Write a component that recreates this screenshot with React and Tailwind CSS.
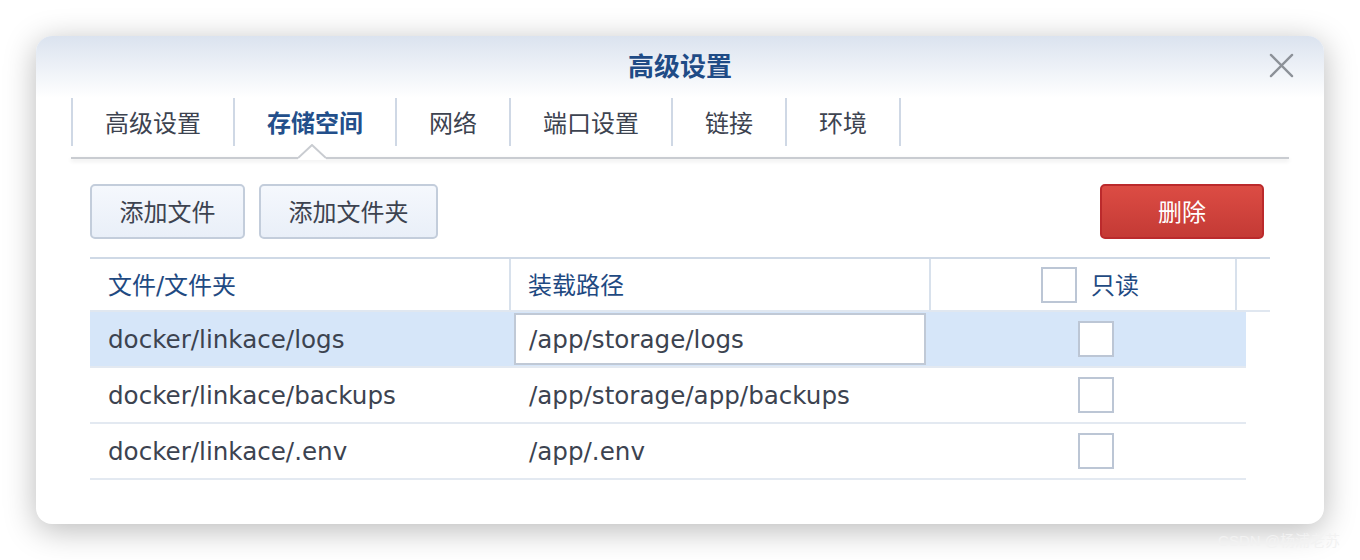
import React from 'react';

const FONT = '"DejaVu Sans", "Noto Sans CJK SC", sans-serif';

const tabs = ['高级设置', '存储空间', '网络', '端口设置', '链接', '环境'];

const rows = [
  { src: 'docker/linkace/logs', dst: '/app/storage/logs', active: true },
  { src: 'docker/linkace/backups', dst: '/app/storage/app/backups' },
  { src: 'docker/linkace/.env', dst: '/app/.env' },
];

const Checkbox = () => (
  <div className="w-[36px] h-[36px] bg-white border-2 border-[#bcc6d5]" />
);

export default function App() {
  return (
    <div className="relative w-[1360px] h-[560px] bg-white pt-[36px] px-[36px]" style={{ fontFamily: FONT }}>
      <div className="relative h-[488px] bg-white rounded-[16px] shadow-[0_6px_32px_rgba(0,0,0,0.28)]">
        {/* --- заголовок --- */}
        <div className="h-[62px] rounded-t-[16px] bg-gradient-to-b from-[#dbe3ef] to-white flex items-center justify-center relative">
          <span className="text-[26px] font-bold text-[#1f4b86] mt-[1px]">高级设置</span>
          <svg className="absolute right-[30px] top-[17px]" width="25" height="25" viewBox="0 0 26 26">
            <path d="M2 2 L24 24 M24 2 L2 24" stroke="#8c9198" strokeWidth="2.4" strokeLinecap="round" />
          </svg>
        </div>

        {/* --- вкладки --- */}
        <div className="px-[35px]">
          <div className="flex h-[48px] border-l-2 border-[#cfd8e5]">
            {tabs.map((t, i) => (
              <div
                key={t}
                className={`flex items-center pt-[3px] px-[32px] border-r-2 border-[#cfd8e5] text-[24px] ${i === 1 ? 'font-bold text-[#234f8b]' : 'text-[#3d4350]'}`}
              >
                {t}
              </div>
            ))}
          </div>
          <div className="relative mt-[11px] h-[2px] bg-[#c9ccd1] shadow-[0_2px_4px_rgba(0,0,0,0.12)]">
            <svg className="absolute left-[227px] top-[-13px]" width="28" height="16" viewBox="0 0 28 16">
              <path d="M0 14 L14 1 L28 14 L28 16 L0 16 Z" fill="white" />
              <path d="M0 14 L14 1 L28 14" stroke="#c9ccd1" strokeWidth="2" fill="none" />
            </svg>
          </div>
        </div>

        {/* --- кнопки --- */}
        <div className="px-[54px] pt-[25px]">
          <div className="flex items-center gap-[14px]">
            <button className="w-[155px] h-[55px] pt-[2px] rounded-[5px] border-2 border-[#c3cddb] bg-gradient-to-b from-[#f5f8fd] to-[#e9eff8] text-[24px] text-[#3d4350]">
              添加文件
            </button>
            <button className="w-[179px] h-[55px] pt-[2px] rounded-[5px] border-2 border-[#c3cddb] bg-gradient-to-b from-[#f5f8fd] to-[#e9eff8] text-[24px] text-[#3d4350]">
              添加文件夹
            </button>
            <button className="ml-auto mr-[6px] w-[164px] h-[55px] pt-[2px] rounded-[5px] border-2 border-[#bb2a2c] bg-gradient-to-b from-[#dc4c44] to-[#c43a35] text-[24px] text-white">
              删除
            </button>
          </div>

          {/* --- таблиця --- */}
          <div className="mt-[18px]">
            <div className="flex h-[55px] border-t-2 border-b-2 border-t-[#cfd9e6] border-b-[#e0e7f0] text-[24px] text-[#1f4a82]">
              <div className="w-[421px] border-r-2 border-[#d8e1ec] flex items-center pt-[3px] pl-[18px]">文件/文件夹</div>
              <div className="w-[420px] border-r-2 border-[#d8e1ec] flex items-center pt-[3px] pl-[17px]">装载路径</div>
              <div className="w-[306px] border-r-2 border-[#d8e1ec] flex items-center pl-[110px] gap-[14px]">
                <Checkbox />
                <span className="pt-[3px]">只读</span>
              </div>
            </div>
            {rows.map((r) => (
              <div
                key={r.src}
                className={`flex w-[1156px] h-[56px] border-b-2 border-[#e3e9f1] text-[24.6px] text-[#3c4350] ${r.active ? 'bg-[#d6e6f9]' : ''}`}
              >
                <div className="w-[421px] flex items-center pt-[3px] pl-[18px]">{r.src}</div>
                <div className="w-[420px] flex items-center">
                  {r.active ? (
                    <div className="ml-[3px] w-[412px] h-[52px] bg-white border-2 border-[#c0c9d6] flex items-center pt-[3px] pl-[13px]">
                      {r.dst}
                    </div>
                  ) : (
                    <span className="pt-[3px] pl-[18px]">{r.dst}</span>
                  )}
                </div>
                <div className="flex-1 flex items-center pl-[147px]">
                  <Checkbox />
                </div>
              </div>
            ))}
          </div>
        </div>
      </div>
      <div className="absolute right-[20px] bottom-[8px] text-[15px] text-[#f2f2f2]" style={{ fontFamily: '"Liberation Sans", "Noto Sans CJK SC", sans-serif' }}>
        CSDN @杨浦老苏
      </div>
    </div>
  );
}
